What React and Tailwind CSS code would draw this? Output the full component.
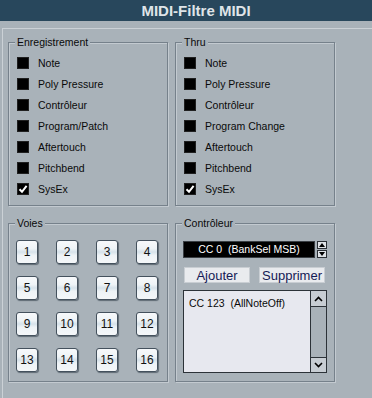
import React from "react";

const BG = "bg-[#a9b2b9]";

function Group({ title, className = "", children }) {
  return (
    <div className={"relative border border-[#76818b] shadow-[1px_1px_0_#c3cad0,inset_1px_1px_0_#c3cad0] " + className}>
      <span className="absolute left-[6px] top-[-7px] px-[2px] bg-[#a9b2b9] text-[10.5px] leading-[12px] text-[#0a0a0a]">
        {title}
      </span>
      {children}
    </div>
  );
}

function Check({ label, checked }) {
  return (
    <div className="flex items-center h-[21px]">
      <div className="w-[12px] h-[12px] bg-black border border-[#202020] flex items-center justify-center">
        {checked && (
          <svg width="10" height="10" viewBox="0 0 10 10">
            <path d="M1.5 5.2 L4 7.8 L8.6 1.8" stroke="#ffffff" strokeWidth="2" fill="none" />
          </svg>
        )}
      </div>
      <span className="ml-[9px] text-[10.5px] leading-[12px] text-[#0a0a0a]">{label}</span>
    </div>
  );
}

function ChanBtn({ n }) {
  return (
    <div className="w-[22px] h-[24px] rounded-[3px] border border-[#44515d] bg-[linear-gradient(to_bottom,#f7f9fb_0%,#eef3f6_35%,#d6e2ea_50%,#eef3f6_65%,#f4f7f9_100%)] shadow-[1px_1px_1px_#5f6a74] flex items-center justify-center text-[12px] leading-none text-[#111]">
      {n}
    </div>
  );
}

export default function App() {
  const rec = ["Note", "Poly Pressure", "Contrôleur", "Program/Patch", "Aftertouch", "Pitchbend", "SysEx"];
  const thru = ["Note", "Poly Pressure", "Contrôleur", "Program Change", "Aftertouch", "Pitchbend", "SysEx"];
  const nums = Array.from({ length: 16 }, (_, i) => i + 1);
  return (
    <div className={"w-[372px] h-[398px] overflow-hidden font-['Liberation_Sans',Arial,sans-serif] " + BG}>
      <div className="h-[21px] bg-[#28475c] flex items-center justify-center pl-[20px] text-[15px] font-bold text-[#dfe4e8] leading-none">
        MIDI-Filtre MIDI
      </div>
      <div className="mt-[7px] ml-[2px] w-[370px] h-[370px] border-t border-l border-[#cbd1d6] pl-[5px] pt-[13px]">
        <div className="flex gap-[7px]">
          <Group title="Enregistrement" className="w-[160px] h-[164px] pt-[9px] pl-[8px]">
            {rec.map((l, i) => (
              <Check key={l} label={l} checked={i === 6} />
            ))}
          </Group>
          <Group title="Thru" className="w-[160px] h-[164px] pt-[9px] pl-[8px]">
            {thru.map((l, i) => (
              <Check key={l} label={l} checked={i === 6} />
            ))}
          </Group>
        </div>
        <div className="flex gap-[7px] mt-[17px]">
          <Group title="Voies" className="w-[160px] h-[159px] pt-[16px] pl-[7px]">
            <div className="grid grid-cols-[repeat(4,22px)] gap-x-[18px] gap-y-[12px]">
              {nums.map((n) => (
                <ChanBtn key={n} n={n} />
              ))}
            </div>
          </Group>
          <Group title="Contrôleur" className="w-[160px] h-[159px] pt-[17px] pl-[7px]">
            <div className="flex items-center gap-[2px]">
              <div className="w-[132px] h-[17px] bg-black border border-[#3a3f44] flex items-center justify-center text-white text-[10.5px] leading-none whitespace-pre">
                CC 0  (BankSel MSB)
              </div>
              <div className="flex flex-col gap-[1px]">
                <div className="w-[10px] h-[8px] bg-[#dfe3e7] border border-[#2a2f34] flex items-center justify-center">
                  <svg width="6" height="4" viewBox="0 0 6 4"><path d="M0 4 L3 0 L6 4 Z" fill="#000" /></svg>
                </div>
                <div className="w-[10px] h-[8px] bg-[#dfe3e7] border border-[#2a2f34] flex items-center justify-center">
                  <svg width="6" height="4" viewBox="0 0 6 4"><path d="M0 0 L3 4 L6 0 Z" fill="#000" /></svg>
                </div>
              </div>
            </div>
            <div className="flex gap-[9px] mt-[9px] pl-[1px]">
              <div className="w-[66px] h-[16px] bg-[#e9ebee] border border-[#c9ced3] flex items-center justify-center text-[13px] leading-none text-[#151a55]">
                Ajouter
              </div>
              <div className="w-[66px] h-[16px] bg-[#e9ebee] border border-[#c9ced3] flex items-center justify-center text-[13px] leading-none text-[#151a55]">
                Supprimer
              </div>
            </div>
            <div className="mt-[7px] w-[144px] h-[83px] border border-[#2c3238] bg-[#e7e8ef] flex">
              <div className="flex-1 pl-[5px] pt-[6px] text-[10.5px] leading-[12px] text-[#0a0a0a] whitespace-pre">
                CC 123  (AllNoteOff)
              </div>
              <div className="w-[16px] flex flex-col border-l border-[#2c3238] bg-[#a9b2b9]">
                <div className="h-[16px] bg-[#c7cdd3] border-b border-[#2c3238] flex items-center justify-center">
                  <svg width="9" height="6" viewBox="0 0 9 6"><path d="M1 5 L4.5 1.5 L8 5" stroke="#000" strokeWidth="1.6" fill="none" /></svg>
                </div>
                <div className="flex-1" />
                <div className="h-[15px] bg-[#c7cdd3] border-t border-[#2c3238] flex items-center justify-center">
                  <svg width="9" height="6" viewBox="0 0 9 6"><path d="M1 1 L4.5 4.5 L8 1" stroke="#000" strokeWidth="1.6" fill="none" /></svg>
                </div>
              </div>
            </div>
          </Group>
        </div>
      </div>
    </div>
  );
}
